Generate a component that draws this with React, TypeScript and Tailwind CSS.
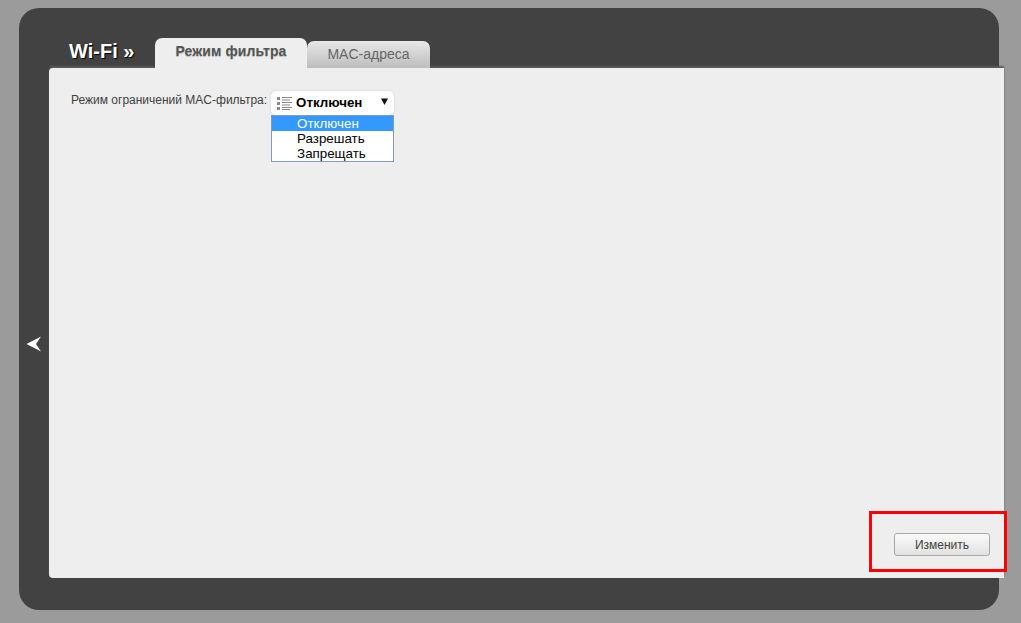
export default function App() {
  return (
    <div className="h-[623px] w-[1021px] overflow-hidden bg-[#9b9b9b] pl-[19px] pt-2 font-['Liberation_Sans',Arial,sans-serif]">
      <div className="flex h-[602px] w-[980px] rounded-[20px] bg-[#424242]">
        <div className="flex w-[30px] shrink-0 items-center justify-center pt-[70px]">
          <svg width="16" height="16" viewBox="0 0 16 16">
            <path d="M0.5 8 L15 0.5 L10 8 L15 15.5 Z" fill="#ffffff" />
          </svg>
        </div>
        <div className="flex w-[955px] shrink-0 flex-col pt-[30px]">
          <div className="relative z-10 flex h-[30px] items-end">
            <div className="w-[106px] self-start pl-[20px] pt-[1px] text-[20px] font-bold leading-[24px] text-white [text-shadow:1px_1px_1px_#000]">
              Wi-Fi »
            </div>
            <div className="flex h-[30px] w-[152px] justify-center rounded-t-[7px] bg-[#eeeeee] pt-[5px] text-[14px] font-bold leading-4 tracking-[0.1px] text-[#555555] [text-shadow:0_1px_1px_#bbb]">
              Режим фильтра
            </div>
            <div className="flex h-[27px] w-[123px] justify-center rounded-t-[7px] bg-gradient-to-b from-[#e8e8e8] to-[#bdbdbd] pt-[5px] text-[14px] leading-4 text-[#666666]">
              MAC-адреса
            </div>
          </div>
          <div className="relative flex h-[510px] flex-col justify-between rounded-l-[4px] bg-[#eeeeee] pb-[22px] pl-[22px] pr-[14px] pt-[23px] shadow-[0_-2px_2px_#5a5a5a]">
            <div className="flex items-start">
              <span className="mr-[4px] mt-[2px] text-[12px] leading-[14px] text-[#404040]">
                Режим ограничений MAC-фильтра:
              </span>
              <div className="relative">
                <div className="flex h-[24px] w-[123px] items-center rounded-[5px] bg-white pl-[6px] pr-[6px] shadow-[0_0_2px_#c4c4c4]">
                  <svg width="15" height="14" viewBox="0 0 15 14" className="mr-[4px]">
                    <g fill="#888888">
                      <rect x="0" y="1" width="3" height="3" />
                      <rect x="0" y="6" width="3" height="3" />
                      <rect x="0" y="11" width="3" height="3" />
                      <rect x="5" y="1" width="10" height="1" />
                      <rect x="5" y="3.500" width="8" height="1" />
                      <rect x="5" y="6" width="10" height="1" />
                      <rect x="5" y="8.500" width="8" height="1" />
                      <rect x="5" y="11" width="10" height="1" />
                      <rect x="5" y="13" width="8" height="1" />
                    </g>
                  </svg>
                  <span className="text-[13.33px] font-bold leading-4 text-black">Отключен</span>
                  <svg width="7" height="7" viewBox="0 0 7 7" className="-mt-[3px] ml-auto">
                    <path d="M0 0.500 H7 L3.500 7 Z" fill="#111111" />
                  </svg>
                </div>
                <ul className="absolute left-0 top-[24px] w-[123px] border border-[#7f9db9] bg-white text-[13.33px] leading-[15px] text-black">
                  <li className="bg-[#3399ff] pl-[25px] text-white">Отключен</li>
                  <li className="pl-[25px]">Разрешать</li>
                  <li className="pl-[25px]">Запрещать</li>
                </ul>
              </div>
            </div>
            <div className="flex justify-end">
              <button className="h-[23px] w-[96px] rounded-[3px] border border-[#a8a8a8] bg-gradient-to-b from-[#fafafa] to-[#e2e2e2] text-[12px] leading-[20px] text-[#404040]">
                Изменить
              </button>
            </div>
            <div className="absolute left-[820px] top-[443px] h-[61px] w-[138px] border-[3px] border-[#ff0000]" />
          </div>
        </div>
      </div>
    </div>
  );
}
